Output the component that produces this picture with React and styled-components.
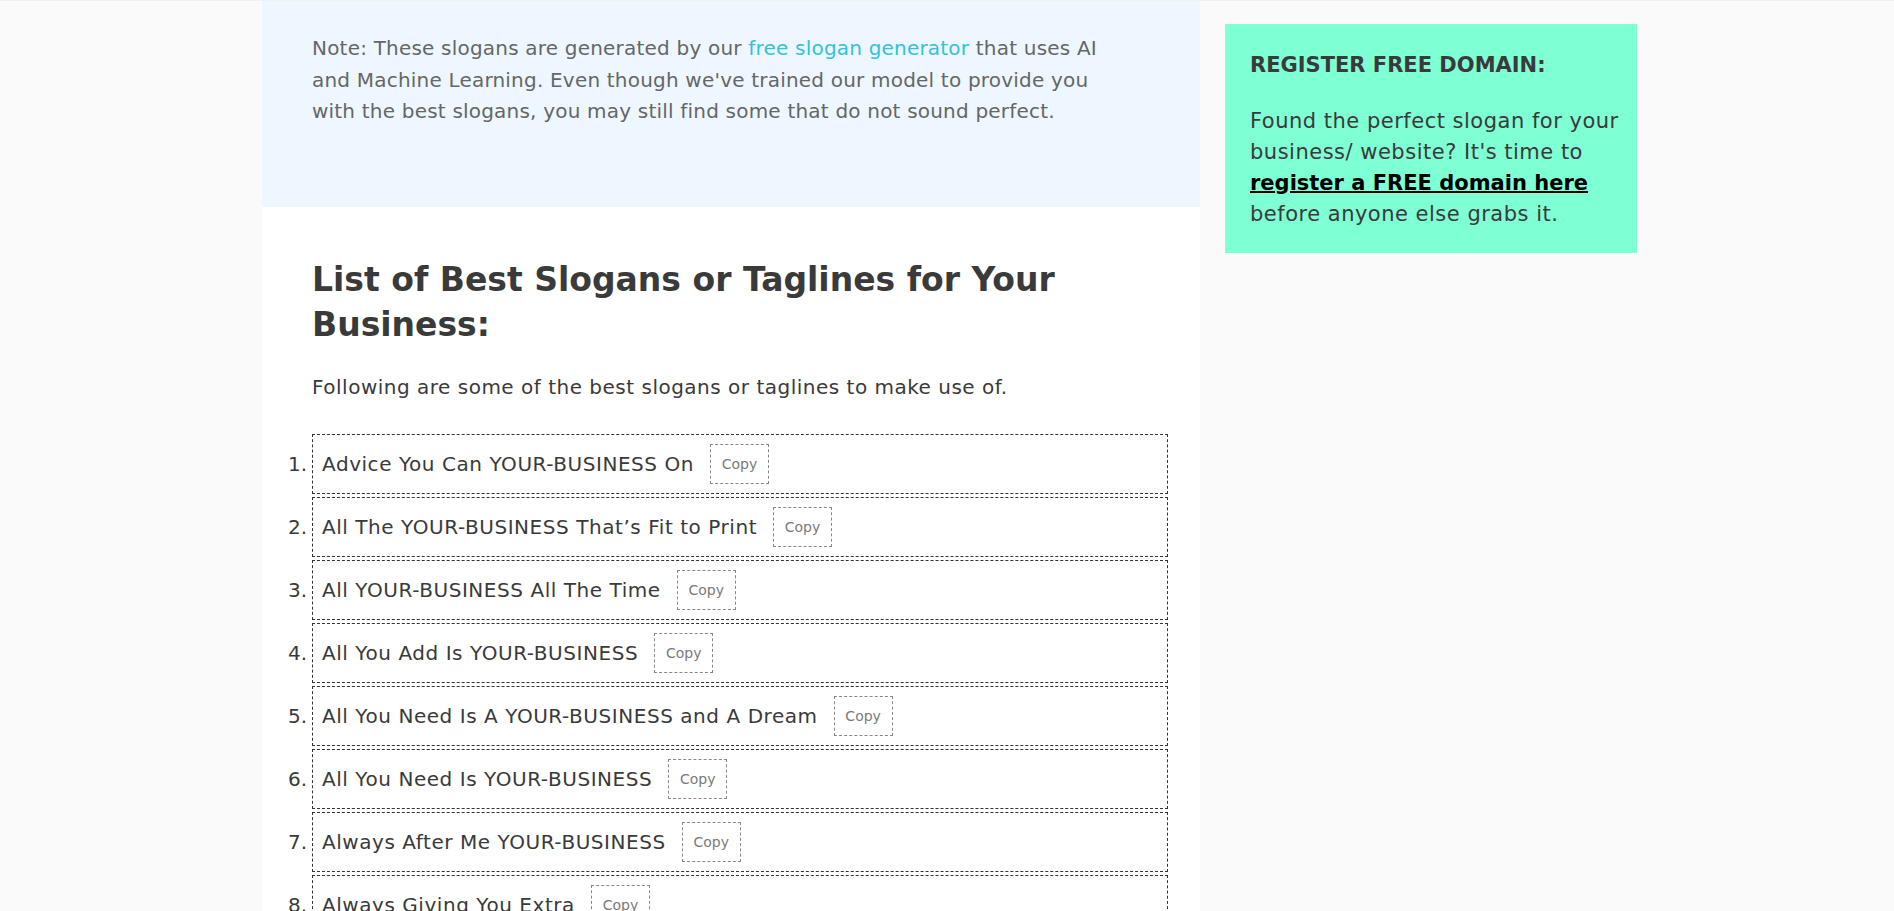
import React from "react";
import styled, { createGlobalStyle } from "styled-components";

const Global = createGlobalStyle`
  html, body { margin: 0; padding: 0; }
  body {
    background: #fafafa;
    font-family: "DejaVu Sans", "Open Sans", sans-serif;
    color: #333;
    border-top: 1px solid #f0f1f3;
  }
`;

const Layout = styled.div`
  display: grid;
  grid-template-columns: 938px 412px;
  column-gap: 25px;
  margin-left: 262px;
  align-items: start;
`;

const Main = styled.main`
  background: #fff;
`;

const NoteBox = styled.div`
  background: #eef7ff;
  padding: 32px 70px 79px 50px;
`;

const NoteText = styled.p`
  margin: 0;
  font-size: 20px;
  line-height: 31.5px;
  letter-spacing: 0.2px;
  color: #666;
`;

const Link = styled.a`
  color: #30c3dc;
  text-decoration: none;
`;

const Section = styled.section`
  padding: 50px 32px 0 50px;
`;

const Heading = styled.h2`
  margin: 0;
  font-size: 33px;
  line-height: 45px;
  font-weight: 700;
  color: #3a3a3a;
`;

const Intro = styled.p`
  margin: 25px 0 31px;
  font-size: 20px;
  line-height: 31px;
  letter-spacing: 0.5px;
  color: #3a3a3a;
`;

const List = styled.ol`
  list-style: none;
  margin: 0 0 0 -50px;
  padding: 0;
  display: flex;
  flex-direction: column;
  gap: 3px;
`;

const Row = styled.li`
  display: grid;
  grid-template-columns: 50px 1fr;
  align-items: center;
`;

const Num = styled.span`
  text-align: right;
  padding-right: 5px;
  font-size: 20px;
  color: #3a3a3a;
`;

const Item = styled.div`
  height: 60px;
  box-sizing: border-box;
  border: 1px dashed #333;
  padding-left: 9px;
  display: flex;
  align-items: center;
  gap: 16px;
  font-size: 20px;
  letter-spacing: 0.55px;
  color: #3a3a3a;
`;

const CopyBtn = styled.button`
  width: 59px;
  height: 40px;
  box-sizing: border-box;
  border: 1px dashed #888;
  background: transparent;
  font-family: inherit;
  font-size: 14px;
  color: #7a7a7a;
  padding: 0;
  cursor: pointer;
`;

const Side = styled.aside`
  margin-top: 23px;
  background: #7fffd4;
  padding: 26px 12px 23px 25px;
`;

const SideTitle = styled.h3`
  margin: 0 0 26px;
  font-size: 21px;
  line-height: 30px;
  font-weight: 700;
  color: #3a3a3a;
`;

const SideText = styled.p`
  margin: 0;
  font-size: 21px;
  line-height: 31px;
  letter-spacing: 0.5px;
  color: #3a3a3a;
`;

const SideLink = styled.a`
  color: #000;
  font-weight: 700;
  letter-spacing: 0;
  text-decoration: underline;
  text-decoration-thickness: 2px;
`;

const slogans = [
  "Advice You Can YOUR-BUSINESS On",
  "All The YOUR-BUSINESS That’s Fit to Print",
  "All YOUR-BUSINESS All The Time",
  "All You Add Is YOUR-BUSINESS",
  "All You Need Is A YOUR-BUSINESS and A Dream",
  "All You Need Is YOUR-BUSINESS",
  "Always After Me YOUR-BUSINESS",
  "Always Giving You Extra",
  "Always The Real Thing",
  "America Runs On YOUR-BUSINESS",
];

export default function App() {
  return (
    <>
      <Global />
      <Layout>
        <Main>
          <NoteBox>
            <NoteText>
              Note: These slogans are generated by our{" "}
              <Link href="#">free slogan generator</Link> that uses AI and
              Machine Learning. Even though we've trained our model to provide
              you with the best slogans, you may still find some that do not
              sound perfect.
            </NoteText>
          </NoteBox>
          <Section>
            <Heading>List of Best Slogans or Taglines for Your Business:</Heading>
            <Intro>Following are some of the best slogans or taglines to make use of.</Intro>
            <List>
              {slogans.map((s, i) => (
                <Row key={i}>
                  <Num>{i + 1}.</Num>
                  <Item>
                    <span>{s}</span>
                    <CopyBtn>Copy</CopyBtn>
                  </Item>
                </Row>
              ))}
            </List>
          </Section>
        </Main>
        <Side>
          <SideTitle>REGISTER FREE DOMAIN:</SideTitle>
          <SideText>
            Found the perfect slogan for your business/ website? It's time to{" "}
            <SideLink href="#">register a FREE domain here</SideLink> before
            anyone else grabs it.
          </SideText>
        </Side>
      </Layout>
    </>
  );
}
